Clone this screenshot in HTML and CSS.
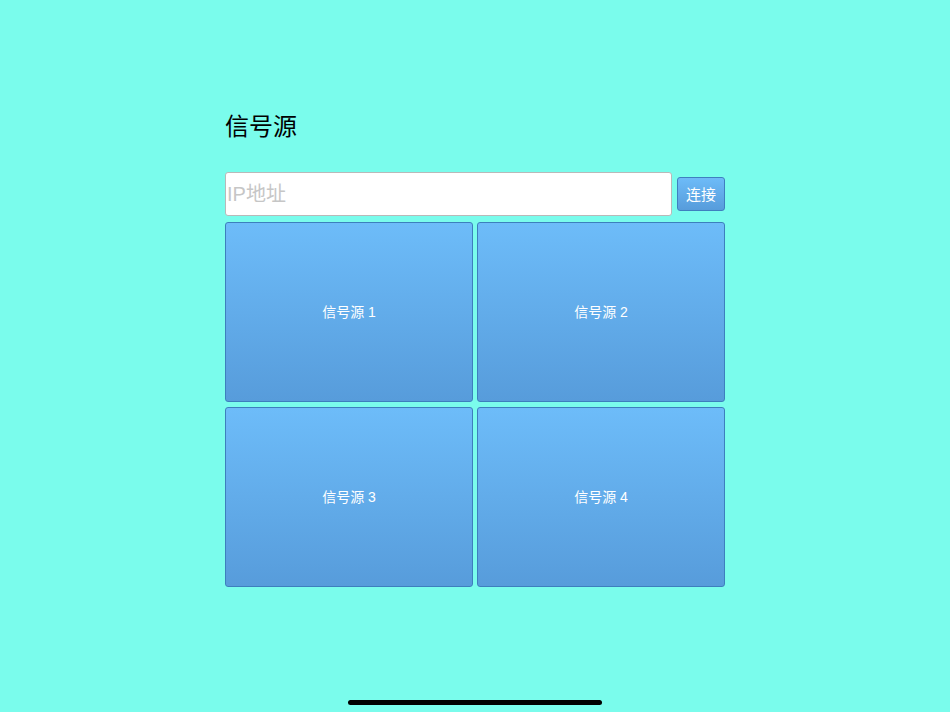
FILE: index.html
```html
<!DOCTYPE html>
<html lang="zh">
<head>
<meta charset="utf-8">
<title>信号源</title>
<link rel="stylesheet" href="styles.css">
</head>
<body>
<main class="page">
  <h1 class="title">信号源</h1>
  <div class="connect-row">
    <input class="ip-input" type="text" placeholder="IP地址">
    <button class="connect-btn">连接</button>
  </div>
  <div class="grid">
    <button class="tile">信号源 1</button>
    <button class="tile">信号源 2</button>
    <button class="tile">信号源 3</button>
    <button class="tile">信号源 4</button>
  </div>
</main>
<div class="home-indicator"></div>
</body>
</html>
```
FILE: styles.css
```css
html, body {
  margin: 0;
  padding: 0;
  height: 100%;
}
body {
  background: #7afcec;
  font-family: "Liberation Sans", "Noto Sans CJK SC", sans-serif;
  position: relative;
  overflow: hidden;
}
.page {
  width: 500px;
  margin: 0 auto;
  padding-top: 109px;
}
.title {
  margin: 0;
  font-size: 24px;
  font-weight: 400;
  line-height: 36px;
  color: #000;
  font-family: "Liberation Sans", "Noto Sans CJK SC", sans-serif;
}
.connect-row {
  margin-top: 27px;
  display: flex;
  align-items: center;
  gap: 5px;
}
.ip-input {
  box-sizing: border-box;
  width: 447px;
  height: 44px;
  border: 1px solid #b9b9b9;
  border-radius: 3px;
  background: #fff;
  padding: 0 0 0 1px;
  font-size: 20px;
  font-family: "Liberation Sans", "Noto Sans CJK SC", sans-serif;
  outline: none;
}
.ip-input::placeholder {
  color: #c6c6c6;
}
.connect-btn {
  box-sizing: border-box;
  width: 48px;
  height: 34px;
  border: 1px solid #3f7fbf;
  border-radius: 3px;
  background: linear-gradient(#6dbbf8, #579cdb);
  color: #fff;
  font-size: 15px;
  font-family: "Liberation Sans", "Noto Sans CJK SC", sans-serif;
  padding: 0 0 2px;
}
.grid {
  margin-top: 6px;
  display: grid;
  grid-template-columns: 248px 248px;
  grid-auto-rows: 180px;
  gap: 5px 4px;
}
.tile {
  box-sizing: border-box;
  border: 1px solid #3d7fbd;
  border-radius: 3px;
  background: linear-gradient(#6dbcf9, #579cdb);
  color: #fff;
  font-size: 14px;
  font-family: "Liberation Sans", "Noto Sans CJK SC", sans-serif;
  padding: 0 0 3px;
  margin: 0;
}
.home-indicator {
  position: absolute;
  left: 348px;
  top: 700px;
  width: 254px;
  height: 5px;
  border-radius: 3px;
  background: #000;
}
```
